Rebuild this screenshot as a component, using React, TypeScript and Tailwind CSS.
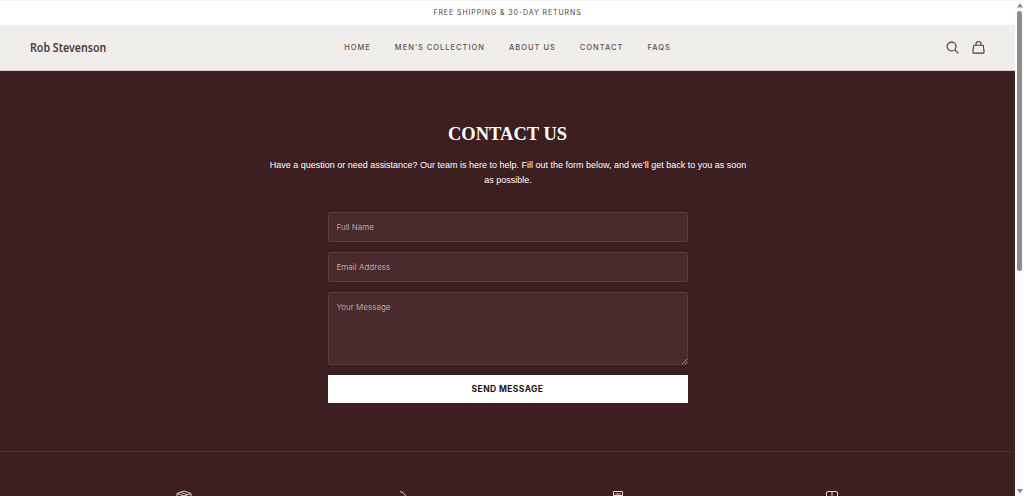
import type { ReactNode } from "react";

const navLinks = ["Home", "Men’s Collection", "About us", "Contact", "FAQs"];

export default function App() {
  return (
    <div className="flex h-[496px] w-[1024px] overflow-hidden bg-white font-['Liberation_Sans',sans-serif]">
      <div className="flex w-[1015px] shrink-0 flex-col">
        <div className="flex h-[25px] shrink-0 items-center justify-center border-t border-[#efefef] bg-white font-['Inter',sans-serif] text-[7px] tracking-[0.91px] text-[#4a4444] uppercase">
          Free shipping &amp; 30-day returns
        </div>
        <Header />
        <main className="flex grow flex-col bg-[#3d1f21]">
          <ContactSection />
          <FeatureStrip />
        </main>
      </div>
      <Scrollbar />
    </div>
  );
}

function Header() {
  return (
    <header className="grid h-[46px] shrink-0 grid-cols-[1fr_auto_1fr] items-center border-b border-[#d6d0cc] bg-[#f0eeea] px-[30px]">
      <a className="origin-left scale-x-[0.817] font-['Noto_Sans',sans-serif] text-[13px] leading-none font-semibold whitespace-nowrap text-[#513839]">Rob Stevenson</a>
      <nav className="flex gap-6 font-['Inter',sans-serif] text-[7.5px] font-medium tracking-[1px] text-[#5f5050] uppercase">
        {navLinks.map((link) => <a key={link}>{link}</a>)}
      </nav>
      <div className="flex items-center justify-end gap-[13px] text-[#4a3a3a]">
        <svg className="size-[13px]" viewBox="0 0 14 14" fill="none" stroke="currentColor" strokeWidth="1.2">
          <circle cx="6" cy="6" r="4.8" />
          <path d="m9.5 9.5 3.9 3.9" />
        </svg>
        <svg className="size-[13px]" viewBox="0 0 14 14" fill="none" stroke="currentColor" strokeWidth="1.2" strokeLinejoin="round">
          <path d="M2.5 4.6h9q.7 0 .8.8l.7 6.2q.1 1.5-1.3 1.5H2.3q-1.4 0-1.3-1.5l.7-6.2q.1-.8.8-.8z" />
          <path d="M4.3 4.6V3.3a2.7 2.7 0 0 1 5.4 0v1.3" />
        </svg>
      </div>
    </header>
  );
}

function ContactSection() {
  const field = "block w-full rounded-[2px] border border-[#593b3e] bg-[#4b2a2d] px-2 text-[8px] text-white outline-none placeholder:text-[#b5a4a5] font-['Inter',sans-serif]";

  return (
    <section className="flex h-[381px] shrink-0 flex-col items-center border-b border-[#4b2c2f] pt-[51px] text-white">
      <h1 className="font-['Liberation_Serif',serif] text-[18.5px] leading-6 font-bold">CONTACT US</h1>
      <p className="mt-[11px] w-[530px] scale-x-[0.91] text-center text-[9.9px] leading-[15px]">
        Have a question or need assistance? Our team is here to help. Fill out the form below, and we’ll get back to you as soon as possible.
      </p>
      <form className="mt-[25px] flex w-[360px] flex-col gap-[10px]">
        <input className={`${field} h-[30px]`} placeholder="Full Name" />
        <input className={`${field} h-[30px]`} placeholder="Email Address" />
        <div className="relative">
          <textarea className={`${field} h-[73px] resize-none pt-2`} placeholder="Your Message" />
          <svg className="absolute right-[1px] bottom-[1px] size-[5px]" viewBox="0 0 5 5" stroke="#a89a9b" strokeWidth="0.8"><path d="M0 5 5 0M3 5l2-2" /></svg>
        </div>
        <button type="button" className="h-[28px] bg-white font-['Inter',sans-serif] text-[8.5px] font-bold tracking-[0.4px] text-[#1a1212]">SEND MESSAGE</button>
      </form>
    </section>
  );
}

function FeatureStrip() {
  return (
    <section className="flex h-11 shrink-0 justify-center gap-[200px] overflow-hidden pt-[38px] text-[#e0d4d4]">
      <FeatureIcon>
        <path d="M1 3.5 8 1l7 2.5v8L8 15l-7-3.5zM1 3.5 8 6l7-2.5M8 6v9M4.5 2.3l7 2.5" />
      </FeatureIcon>
      <FeatureIcon>
        <path d="M8 1.5c3 .5 5.5 3 6 6" />
      </FeatureIcon>
      <FeatureIcon>
        <path d="M5.5 8V1.5h9V8M7.5 4h5M5 5.5h10" />
      </FeatureIcon>
      <FeatureIcon>
        <path d="M2.5 14V3q0-1.5 1.5-1.5h8q1.5 0 1.5 1.5v11M8 1.5V10" />
      </FeatureIcon>
    </section>
  );
}

function FeatureIcon({ children }: { children: ReactNode }) {
  return <svg className="size-4 shrink-0" viewBox="0 0 16 16" fill="none" stroke="currentColor" strokeWidth="1">{children}</svg>;
}

function Scrollbar() {
  return (
    <div className="flex w-[9px] shrink-0 flex-col items-center bg-[#fcfcfc] pt-[3px] pb-[2px]">
      <svg className="h-[5px] w-[6px] shrink-0" viewBox="0 0 6 5" fill="#8b8b8b"><path d="M3 0 6 4.5H0z" /></svg>
      <div className="mt-[3px] h-[260px] w-[5px] shrink-0 rounded-full bg-[#8b8b8b]" />
      <svg className="mt-auto h-[5px] w-[6px] shrink-0" viewBox="0 0 6 5" fill="#8b8b8b"><path d="M0 0h6L3 4.5z" /></svg>
    </div>
  );
}
